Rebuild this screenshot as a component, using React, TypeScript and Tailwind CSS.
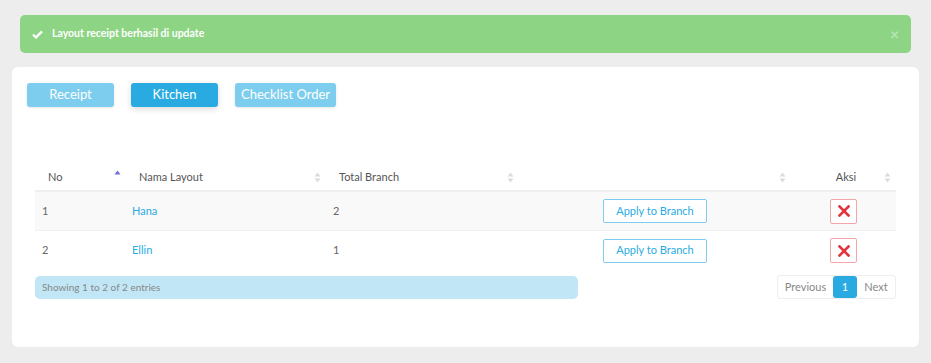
import React from "react";

const FONT = { fontFamily: "Lato, 'Noto Sans', sans-serif" };

function SortIcon({ dir }: { dir?: "asc" }) {
  return (
    <svg width="7" height="11" viewBox="0 0 7 11" aria-hidden>
      <path d="M3.5 0.5 L6.5 4.5 H0.5 Z" fill={dir === "asc" ? "#6f6fd8" : "#dcdcdc"} />
      {dir !== "asc" && <path d="M3.5 10.5 L6.5 6.5 H0.5 Z" fill="#dcdcdc" />}
    </svg>
  );
}

function XIcon() {
  return (
    <svg width="12" height="12" viewBox="0 0 12 12" aria-hidden>
      <path d="M1.5 1.5 L10.5 10.5 M10.5 1.5 L1.5 10.5" stroke="#e2343f" strokeWidth="2.6" strokeLinecap="square" />
    </svg>
  );
}

const ROWS = [
  { no: 1, name: "Hana", total: 2 },
  { no: 2, name: "Ellin", total: 1 },
];

export default function App() {
  return (
    <div className="w-[931px] h-[363px] bg-[#ededed] pt-[15px]" style={FONT}>
      {/* Alert */}
      <div className="ml-[20px] w-[891px] h-[38px] rounded-[5px] bg-[#8dd584] flex items-center pl-[12px] pr-[12px] text-white">
        <svg width="11" height="9" viewBox="0 0 11 9" aria-hidden>
          <path d="M1 4.6 L4 7.4 L10 1.4" stroke="white" strokeWidth="2.2" fill="none" />
        </svg>
        <span className="ml-[9px] text-[10.5px] font-bold">Layout receipt berhasil di update</span>
        <span className="ml-auto text-[15px] font-bold text-white/40 leading-none">×</span>
      </div>

      {/* Card */}
      <div className="mt-[14px] ml-[12px] w-[907px] h-[280px] bg-white rounded-[6px] pt-[16px] px-[15px]">
        <div className="flex gap-[17px]">
          <button className="w-[87px] h-[24px] rounded-[3px] bg-[#7ccdee] text-white text-[13px] shadow-[0_1px_3px_rgba(0,0,0,0.1)]">Receipt</button>
          <button className="w-[87px] h-[24px] rounded-[3px] bg-[#29abe2] text-white text-[13px] shadow-[0_2px_6px_rgba(0,0,0,0.15)]">Kitchen</button>
          <button className="w-[101px] h-[24px] rounded-[3px] bg-[#7ccdee] text-white text-[13px] shadow-[0_1px_3px_rgba(0,0,0,0.1)]">Checklist Order</button>
        </div>

        <div className="ml-[8px] w-[861px] mt-[54px]">
          {/* header */}
          <div className="flex h-[31px] pt-[3px] border-b-2 border-[#efefef] text-[11px] text-[#555] items-center">
            <div className="w-[91px] flex items-center pl-[13px] pr-[5px]"><span>No</span><span className="ml-auto -mt-[3px]"><SortIcon dir="asc" /></span></div>
            <div className="w-[200px] flex items-center pl-[13px] pr-[5px]"><span>Nama Layout</span><span className="ml-auto"><SortIcon /></span></div>
            <div className="w-[193px] flex items-center pl-[13px] pr-[5px]"><span>Total Branch</span><span className="ml-auto"><SortIcon /></span></div>
            <div className="w-[272px] flex items-center pl-[13px] pr-[5px]"><span className="ml-auto"><SortIcon /></span></div>
            <div className="w-[105px] flex items-center pl-[13px] pr-[5px]"><span className="flex-1 text-center pl-[4px]">Aksi</span><SortIcon /></div>
          </div>
          {ROWS.map((r, i) => (
            <div key={r.no} className={`flex h-[39px] items-center text-[11px] text-[#666] ${i === 0 ? "bg-[#f9f9f9] border-b border-[#f0f0f0]" : ""}`}>
              <div className="w-[91px] pl-[7px]">{r.no}</div>
              <div className="w-[200px] pl-[6px] text-[#29abe2]">{r.name}</div>
              <div className="w-[193px] pl-[7px]">{r.total}</div>
              <div className="w-[272px] flex justify-center">
                <button className="w-[104px] h-[24px] border border-[#7ccdee] rounded-[2px] bg-white text-[#29abe2] text-[11px]">Apply to Branch</button>
              </div>
              <div className="w-[105px] flex justify-center">
                <button className="w-[27px] h-[25px] border border-[#f2a6ab] rounded-[2px] bg-white flex items-center justify-center"><XIcon /></button>
              </div>
            </div>
          ))}

          {/* footer */}
          <div className="flex items-start mt-[6px]">
            <div className="w-[543px] h-[23px] rounded-[5px] bg-[#c1e7f6] flex items-center pl-[7px] text-[10px] text-[#888]">Showing 1 to 2 of 2 entries</div>
            <div className="ml-auto -mt-[1px] flex h-[24px] text-[11px] border border-[#eee] rounded-[3px]">
              <span className="w-[55px] flex items-center justify-center text-[#888]">Previous</span>
              <span className="w-[24px] flex items-center justify-center bg-[#29abe2] text-white rounded-[3px]">1</span>
              <span className="w-[38px] flex items-center justify-center text-[#888]">Next</span>
            </div>
          </div>
        </div>
      </div>
    </div>
  );
}
